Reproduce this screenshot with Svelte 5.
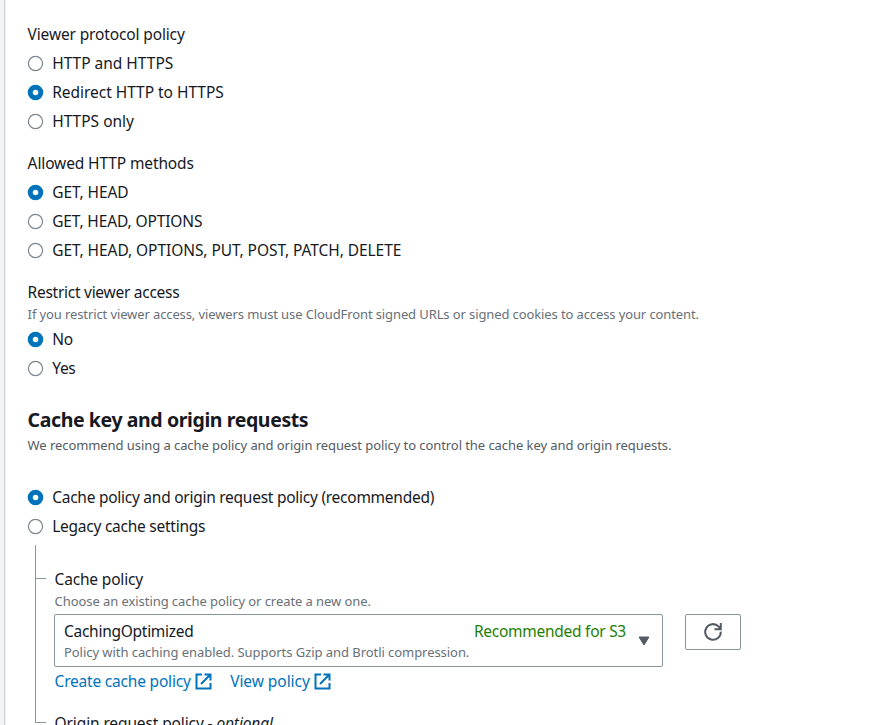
<script>
  const protocols = [
    { text: 'HTTP and HTTPS', ls: -0.01 },
    { text: 'Redirect HTTP to HTTPS', on: true, ls: -0.03 },
    { text: 'HTTPS only', ls: 0 }
  ];
  const methods = [
    { text: 'GET, HEAD', on: true, ls: -0.08 },
    { text: 'GET, HEAD, OPTIONS', ls: -0.13 },
    { text: 'GET, HEAD, OPTIONS, PUT, POST, PATCH, DELETE', ls: -0.07 }
  ];
  const access = [
    { text: 'No', on: true, ls: -0.3 },
    { text: 'Yes', ls: -0.3 }
  ];
  const cacheModes = [
    { text: 'Cache policy and origin request policy (recommended)', on: true, ls: -0.26 },
    { text: 'Legacy cache settings', ls: -0.25 }
  ];
</script>

{#snippet radios(items)}
  {#each items as item}
    <div class="radio">
      <svg width="16" height="16" viewBox="0 0 16 16">
        {#if item.on}
          <circle cx="7.5" cy="7.5" r="5.3" fill="#fff" stroke="#0073bb" stroke-width="5" />
        {:else}
          <circle cx="7.5" cy="7.5" r="7.1" fill="#fff" stroke="#7b858d" stroke-width="1.2" />
        {/if}
      </svg>
      <span style="letter-spacing: {item.ls}px">{item.text}</span>
    </div>
  {/each}
{/snippet}

{#snippet external()}
  <svg class="ext" width="17" height="17" viewBox="0 0 17 17" fill="none" stroke="#0073bb" stroke-width="2">
    <path d="M7 1.5H1.5v14h14V10M9.5 1.5h6v6M15.2 1.8L6 11" />
  </svg>
{/snippet}

<main>
  <section>
    <div class="label l1">Viewer protocol policy</div>
    {@render radios(protocols)}
  </section>
  <section>
    <div class="label l2">Allowed HTTP methods</div>
    {@render radios(methods)}
  </section>
  <section class="access">
    <div class="label l3">Restrict viewer access</div>
    <div class="help h1">If you restrict viewer access, viewers must use CloudFront signed URLs or signed cookies to access your content.</div>
    {@render radios(access)}
  </section>
  <h2><span>Cache key and origin requests</span></h2>
  <div class="help desc">We recommend using a cache policy and origin request policy to control the cache key and origin requests.</div>
  <section class="modes">{@render radios(cacheModes)}</section>

  <div class="tree">
    <div class="rail"><b></b><b></b></div>
    <div class="content">
      <div class="label l4">Cache policy</div>
      <div class="help h2">Choose an existing cache policy or create a new one.</div>
      <div class="pick">
        <div class="select">
          <div class="value">
            <div class="top"><span class="name">CachingOptimized</span><span class="rec">Recommended for S3</span></div>
            <div class="help h3">Policy with caching enabled. Supports Gzip and Brotli compression.</div>
          </div>
          <svg width="12" height="10" viewBox="0 0 12 10"><path d="M1 1h10L6 9z" fill="#545b64" stroke="#545b64" stroke-linejoin="round" /></svg>
        </div>
        <button aria-label="Refresh">
          <svg width="20" height="20" viewBox="0 0 20 20" fill="none" stroke="#545b64" stroke-width="2">
            <path d="M17.8 9.6A7.8 7.8 0 1 1 15.5 4.4L17 6.2M17.8 1v6.2H11.5" />
          </svg>
        </button>
      </div>
      <div class="links">
        <a href="#create"><span class="k1">Create cache policy</span>{@render external()}</a>
        <a href="#view"><span class="k2">View policy</span>{@render external()}</a>
      </div>
      <div class="label l5">Origin request policy - <em>optional</em></div>
    </div>
  </div>
</main>

<style>
  :global(body) { background: #fff; overflow: hidden; }
  main {
    box-sizing: border-box;
    height: 725px;
    overflow: hidden;
    border-left: 4px solid #f2f3f3;
    box-shadow: inset 1.5px 0 #d0d7da;
    padding: 20px 0 0 23.6px;
    font: 15.5px/29px "Noto Sans", sans-serif;
    color: #16191f;
    white-space: nowrap;
  }
  section { margin-bottom: 13px; }
  .label { height: 29px; }
  .l1 { letter-spacing: -0.14px; }
  .l2 { letter-spacing: -0.12px; }
  .l3 { letter-spacing: -0.27px; }
  .l4 { letter-spacing: -0.18px; }
  .radio { display: flex; align-items: center; height: 29px; gap: 8.6px; }
  .radio svg { overflow: visible; }
  .help { font-size: 13px; line-height: 18px; color: #687078; letter-spacing: -0.1px; }
  .h1 { letter-spacing: -0.11px; }
  .access { margin-bottom: 22px; }
  .access .help { margin-top: -2px; margin-bottom: 2px; }
  h2 { margin: 0; font-size: 19.5px; line-height: 30px; font-weight: 700; letter-spacing: -0.4px; }
  .desc { margin-top: 1px; color: #545b64; letter-spacing: -0.07px; }
  .modes { margin: 29px 0 4px; }
  .tree { display: flex; }
  .rail { width: 11px; height: 178px; margin-left: 7.4px; border-left: 1.5px solid #879596; display: flex; flex-direction: column; justify-content: space-between; box-sizing: border-box; }
  .rail b { height: 1px; background: #879596; }
  .rail b:first-child { margin-top: 33px; }
  .content { padding: 20px 0 0 8.6px; }
  .h2 { margin: -2px 0 4px; letter-spacing: -0.07px; }
  .h3 { letter-spacing: -0.055px; }
  .pick { display: flex; gap: 22px; margin-left: -0.6px; }
  .select { box-sizing: border-box; width: 609px; height: 53px; border: 1px solid #879596; border-radius: 2px; display: flex; align-items: center; padding: 0 12px 0 9px; }
  .value { flex: 1; padding-bottom: 2px; }
  .top { display: flex; justify-content: space-between; line-height: 24px; padding-right: 12px; letter-spacing: -0.27px; }
  .rec { color: #1d8102; }
  button { box-sizing: border-box; width: 56px; height: 36px; border: 1px solid #879596; border-radius: 2px; background: #fff; padding: 0; display: flex; align-items: center; justify-content: center; }
  .links { display: flex; gap: 18.5px; height: 29px; }
  .k1 { letter-spacing: -0.2px; }
  .k2 { letter-spacing: -0.05px; }
  a { color: #0073bb; text-decoration: none; display: flex; align-items: center; gap: 4px; }
  .l5 { margin-top: 13px; letter-spacing: -0.12px; }
</style>
